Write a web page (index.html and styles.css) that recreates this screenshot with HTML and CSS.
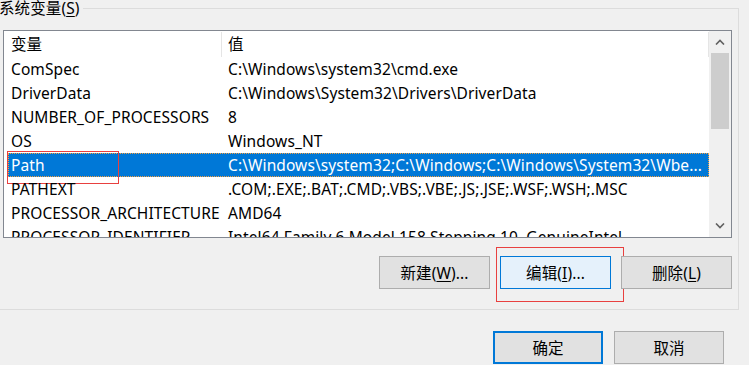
FILE: index.html
```html
<!DOCTYPE html>
<html lang="zh-CN">
<head>
  <meta charset="UTF-8" />
  <title>系统变量</title>
  <link rel="stylesheet" href="styles.css">
</head>
<body>

  <div class="grupo">
    <div class="leyenda">系统变量(<u>S</u>)</div>

    <div class="lista">
      <div class="lista-cuerpo">
        <div class="cabecera">
          <div class="col-nombre">变量</div>
          <div class="col-valor">值</div>
        </div>
        <div class="fila"><div class="c-nombre">ComSpec</div><div class="c-valor">C:\Windows\system32\cmd.exe</div></div>
        <div class="fila"><div class="c-nombre">DriverData</div><div class="c-valor">C:\Windows\System32\Drivers\DriverData</div></div>
        <div class="fila"><div class="c-nombre">NUMBER_OF_PROCESSORS</div><div class="c-valor">8</div></div>
        <div class="fila"><div class="c-nombre">OS</div><div class="c-valor">Windows_NT</div></div>
        <div class="fila sel"><div class="c-nombre marcado">Path</div><div class="c-valor">C:\Windows\system32;C:\Windows;C:\Windows\System32\Wbe...</div></div>
        <div class="fila"><div class="c-nombre">PATHEXT</div><div class="c-valor">.COM;.EXE;.BAT;.CMD;.VBS;.VBE;.JS;.JSE;.WSF;.WSH;.MSC</div></div>
        <div class="fila"><div class="c-nombre">PROCESSOR_ARCHITECTURE</div><div class="c-valor">AMD64</div></div>
        <div class="fila"><div class="c-nombre">PROCESSOR_IDENTIFIER</div><div class="c-valor">Intel64 Family 6 Model 158 Stepping 10, GenuineIntel</div></div>
      </div>
      <div class="barra">
        <div class="flecha">
          <svg width="10" height="6" viewBox="0 0 10 6"><path d="M1 5.5 L5 1.5 L9 5.5" fill="none" stroke="#606060" stroke-width="1.6"/></svg>
        </div>
        <div class="pista"><div class="pulgar"></div></div>
        <div class="flecha">
          <svg width="10" height="6" viewBox="0 0 10 6"><path d="M1 0.5 L5 4.5 L9 0.5" fill="none" stroke="#606060" stroke-width="1.6"/></svg>
        </div>
      </div>
    </div>

    <div class="botones">
      <button class="btn">新建(<u>W</u>)...</button>
      <button class="btn activo marcado-btn">编辑(<u>I</u>)...</button>
      <button class="btn">删除(<u>L</u>)</button>
    </div>
  </div>

  <div class="pie">
    <button class="btn btn-pie defecto">确定</button>
    <button class="btn btn-pie">取消</button>
  </div>

</body>
</html>
```

FILE: styles.css
```css
body {
  margin: 0;
  background-color: #f0f0f0;
  font-family: "Noto Sans", "Noto Sans CJK SC", sans-serif;
  font-size: 15.5px;
  letter-spacing: 0.1px;
  color: #000;
  overflow: hidden;
  width: 749px;
  height: 365px;
}
.grupo {
  position: relative;
  margin: 8px 0 0 -10px;
  width: 749px;
  height: 302px;
  box-sizing: border-box;
  border: 1px solid #dcdcdc;
}
.leyenda {
  position: absolute;
  left: 8px;
  top: -9px;
  line-height: 17px;
  padding-right: 3px;
  background-color: #f0f0f0;
}
u {
  text-decoration-thickness: 1px;
  text-underline-offset: 2px;
}
.lista {
  margin: 21px 0 0 12px;
  width: 729px;
  height: 208px;
  box-sizing: border-box;
  border: 1px solid #828790;
  background-color: #fff;
  display: flex;
  overflow: hidden;
}
.lista-cuerpo {
  flex: 1;
  overflow: hidden;
}
.cabecera {
  display: flex;
  height: 26px;
}
.col-nombre {
  width: 210px;
  padding-left: 7px;
  border-right: 1px solid #e5e5e5;
  margin-top: 1px;
  line-height: 25px;
}
.col-valor {
  flex: 1;
  padding-left: 6px;
  border-right: 1px solid #e5e5e5;
  margin-top: 1px;
  line-height: 25px;
}
.fila {
  display: grid;
  grid-template-columns: 214px 1fr;
  margin-left: 4px;
  height: 24px;
  line-height: 24px;
  white-space: nowrap;
}
.c-nombre {
  padding-left: 3px;
  position: relative;
}
.c-valor {
  padding-left: 6px;
  overflow: hidden;
}
.fila.sel {
  background-color: #0078d7;
  color: #fff;
  outline: 1px dotted #f5a040;
  outline-offset: -1px;
}
.marcado::after {
  content: "";
  position: absolute;
  left: -1px;
  top: -2px;
  width: 110px;
  height: 31px;
  border: 1px solid #e8403f;
}
.barra {
  width: 22px;
  background-color: #f0f0f0;
  display: flex;
  flex-direction: column;
}
.flecha {
  height: 22px;
  display: flex;
  align-items: center;
  justify-content: center;
}
.pista {
  flex: 1;
}
.pulgar {
  margin: 0 2px;
  height: 76px;
  background-color: #cdcdcd;
}
.botones {
  display: flex;
  justify-content: flex-end;
  gap: 10px;
  margin: 18px 6px 0 0;
}
.btn {
  font-family: "Noto Sans", "Noto Sans CJK SC", sans-serif;
  font-size: 15.5px;
  letter-spacing: 0.1px;
  color: #000;
  width: 111px;
  height: 33px;
  padding: 0;
  background-color: #e1e1e1;
  border: 1px solid #adadad;
  position: relative;
}
.btn.activo {
  background-color: #e5f1fb;
  border-color: #0078d7;
}
.marcado-btn::after {
  content: "";
  position: absolute;
  left: -5px;
  top: -10px;
  width: 126px;
  height: 53px;
  border: 1px solid #e8403f;
}
.pie {
  display: flex;
  justify-content: flex-end;
  gap: 11px;
  margin: 21px 25px 0 0;
}
.btn-pie {
  width: 110px;
  height: 33px;
}
.btn.defecto {
  border: 2px solid #0078d7;
}
```
